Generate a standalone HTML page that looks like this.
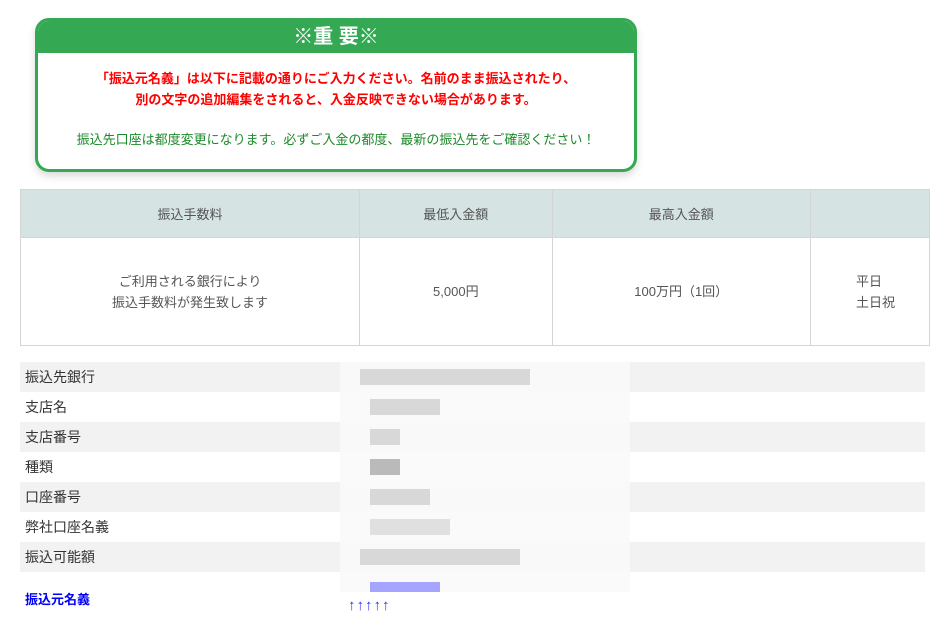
<!DOCTYPE html>
<html><head><meta charset="utf-8"><style>
body{margin:0;width:930px;height:630px;overflow:hidden;background:#fff;font-family:"Liberation Sans","Noto Sans CJK JP",sans-serif;position:relative}
.box{position:absolute;left:35px;top:18px;width:596px;height:148px;border:3px solid #34a853;border-radius:14px;background:#fff;box-shadow:0 4px 8px rgba(0,0,0,.15);overflow:hidden}
.box .hd{background:#34a853;color:#fff;font-weight:bold;font-size:20px;text-align:center;height:32px;line-height:32px}
.red{color:#f00;font-weight:bold;font-size:13px;text-align:center;line-height:21px;margin-top:15px}
.grn{color:#1c8a2a;font-size:13px;text-align:center;margin-top:19px}
table{position:absolute;left:20px;top:189px;border-collapse:collapse;color:#555;font-size:13px}
td,th{border:1px solid #d5d5d5;text-align:center;font-weight:normal}
th{background:#d5e3e3;height:45px}
td{height:105px;line-height:21px}
.rows{position:absolute;left:20px;top:362px;width:905px}
.r{height:30px;line-height:30px;font-size:14px;color:#333;padding-left:5px;position:relative}
.r:nth-child(odd){background:#f2f2f2}
.v{position:absolute;left:320px;top:0;width:290px;height:30px;background:rgba(250,250,250,.9)}
.b{position:absolute;top:7px;height:16px;background:#cfcfcf;opacity:.8}
</style></head><body>
<div class="box"><div class="hd">※重 要※</div>
<div class="red">「振込元名義」は以下に記載の通りにご入力ください。名前のまま振込されたり、<br>別の文字の追加編集をされると、入金反映できない場合があります。</div>
<div class="grn">振込先口座は都度変更になります。必ずご入金の都度、最新の振込先をご確認ください！</div></div>
<table><tr><th style="width:358px">振込手数料</th><th style="width:200px">最低入金額</th><th style="width:271px">最高入金額</th><th style="width:120px"></th></tr>
<tr><td>ご利用される銀行により<br>振込手数料が発生致します</td><td>5,000円</td><td>100万円（1回）</td><td style="text-align:left;padding-left:45px">平日<br>土日祝</td></tr></table>
<div class="rows">
<div class="r">振込先銀行<div class="v"><div class="b" style="left:20px;width:170px"></div></div></div>
<div class="r">支店名<div class="v"><div class="b" style="left:30px;width:70px"></div></div></div>
<div class="r">支店番号<div class="v"><div class="b" style="left:30px;width:30px"></div></div></div>
<div class="r">種類<div class="v"><div class="b" style="left:30px;width:30px;background:#aaa"></div></div></div>
<div class="r">口座番号<div class="v"><div class="b" style="left:30px;width:60px"></div></div></div>
<div class="r">弊社口座名義<div class="v"><div class="b" style="left:30px;width:80px;opacity:.6"></div></div></div>
<div class="r">振込可能額<div class="v"><div class="b" style="left:20px;width:160px"></div></div></div>
<div class="r" style="height:45px;line-height:55px;color:#00f;font-weight:bold;font-size:13px;background:#fff">振込元名義<div class="v" style="height:20px;background:#fafafa"><div class="b" style="left:30px;width:70px;top:10px;height:10px;background:#a5a5ff;opacity:1"></div></div><div style="position:absolute;left:328px;top:25px;line-height:18px;color:#33f;font-weight:normal;font-size:15px;letter-spacing:1px">↑↑↑↑↑</div></div>
</div>
</body></html>
